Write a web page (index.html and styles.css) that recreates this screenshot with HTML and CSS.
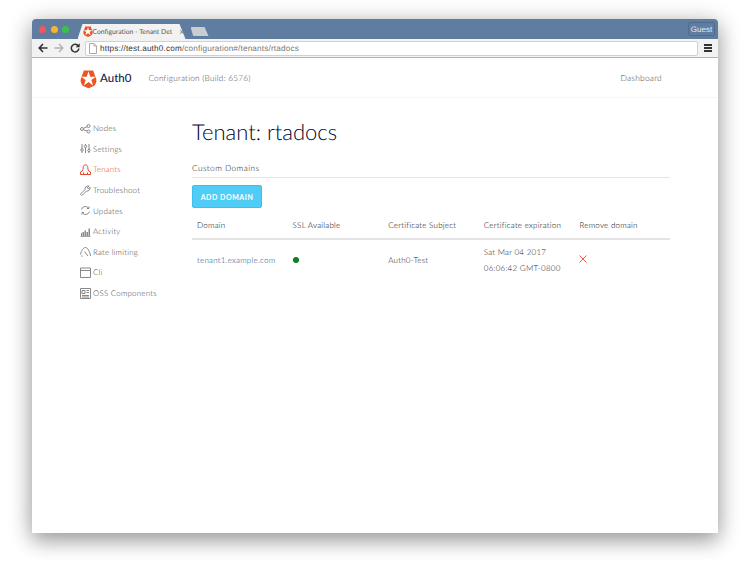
FILE: index.html

```html
<html>
<head>
    <title>Configuration - Tenant Details</title>
    <link rel="stylesheet" href="styles.css">
</head>
<body>
    <div class="window">
        <div class="titlebar">
            <span class="light red"></span>
            <span class="light yellow"></span>
            <span class="light green"></span>
            <div class="tab">
                <svg class="tab-logo" width="10" height="11" viewBox="0 0 22 24"><path fill="#eb5424" d="M17 1H5L1 12c-1 4 1 7 3 9l7 3 7-3c2-2 4-5 3-9z"/><path fill="#fff" d="M11 2l2.200 7h7.300l-5.800 4.300 2.200 7.200L11 16l-5.900 4.500 2.200-7.200L1.500 9h7.300z"/></svg>
                <span class="tab-title">Configuration - Tenant Det</span>
                <span class="tab-close">&#215;</span>
            </div>
            <div class="new-tab"></div>
            <div class="guest">Guest</div>
        </div>
        <div class="toolbar">
            <svg class="nav" width="10" height="10" viewBox="0 0 10 10"><path d="M9.500 5H2M5 1L1.200 5 5 9" fill="none" stroke="#333" stroke-width="1.600"/></svg>
            <svg class="nav" width="10" height="10" viewBox="0 0 10 10"><path d="M.5 5H8M5 1l3.800 4L5 9" fill="none" stroke="#b4b4b4" stroke-width="1.500"/></svg>
            <svg class="nav" width="10" height="10" viewBox="0 0 10 10"><path d="M8.300 3A3.800 3.800 0 1 0 8.900 5.500" fill="none" stroke="#333" stroke-width="1.500"/><path d="M9.700 .3v4H5.700z" fill="#333"/></svg>
            <div class="omnibox">
                <svg width="8" height="11" viewBox="0 0 8 11"><path d="M.5.500h4.500l2.500 2.500v7.500h-7zM5 .5V3h2.500" fill="#fff" stroke="#aaa"/></svg>
                <span class="url">https://test.auth0.com<span class="url-path">/configuration#/tenants/rtadocs</span></span>
            </div>
            <div class="menu"><span></span><span></span><span></span></div>
        </div>
        <div class="page">
            <div class="header">
                <svg class="logo" width="17" height="20" viewBox="0 0 22 24"><path fill="#eb5424" d="M17 1H5L1 12c-1 4 1 7 3 9l7 3 7-3c2-2 4-5 3-9z"/><path fill="#fff" d="M11 2l2.200 7h7.300l-5.800 4.300 2.200 7.200L11 16l-5.900 4.500 2.200-7.200L1.500 9h7.300z"/></svg>
                <span class="brand">Auth0</span>
                <span class="build">Configuration (Build: 6576)</span>
                <a class="dashboard">Dashboard</a>
            </div>
            <div class="content">
                <ul class="sidebar">
                    <li>
                        <svg width="11" height="11" viewBox="0 0 11 11" fill="none" stroke="currentColor"><circle cx="2" cy="6" r="1.500"/><circle cx="8.500" cy="3" r="1.500"/><circle cx="8.500" cy="8.500" r="1.500"/><path d="M3.500 5.300L7 3.700M3.500 6.700L7 8"/></svg>
                        Nodes
                    </li>
                    <li>
                        <svg width="11" height="11" viewBox="0 0 11 11" fill="none" stroke="currentColor"><path d="M2 1v9M5.500 1v9M9 1v9"/><circle cx="2" cy="7" r="1.200" fill="#fff"/><circle cx="5.500" cy="3.500" r="1.200" fill="#fff"/><circle cx="9" cy="7.500" r="1.200" fill="#fff"/></svg>
                        Settings
                    </li>
                    <li class="active">
                        <svg width="11" height="11" viewBox="0 0 11 11" fill="none" stroke="currentColor"><path d="M3.200 3.500c0-3.500 4.600-3.500 4.600 0 0 1.500.2 2.500 1 3.500l1.700 1v2.500H.5V8l1.700-1c.8-1 1-2 1-3.500zM3.500 10.500V8.500M7.500 10.500V8.500"/></svg>
                        Tenants
                    </li>
                    <li>
                        <svg width="11" height="11" viewBox="0 0 11 11" fill="none" stroke="currentColor"><path d="M1 8.500L5 4.500C4.500 2.500 6.500.5 9 1L7.200 2.800l1 1L10 2.200c.5 2.300-1.500 4.300-3.500 3.800L2.500 10c-1 1-2.500-.5-1.500-1.500z"/></svg>
                        Troubleshoot
                    </li>
                    <li>
                        <svg width="11" height="11" viewBox="0 0 11 11" fill="none" stroke="currentColor"><path d="M1.500 4.500a4 4 0 0 1 7-1.500M9.500 6.500a4 4 0 0 1-7 1.500"/><path d="M9 1.500v2H7M2 9.500v-2h2"/></svg>
                        Updates
                    </li>
                    <li>
                        <svg width="11" height="11" viewBox="0 0 11 11" fill="currentColor"><path d="M.5 10h10v.8H.5zM1 7h1v3H1zM2.500 6H4v4H2.500zM4.500 4.500H6V10H4.500zM6.500 6H8v4H6.500zM8.500 2.500H10V10H8.500z"/></svg>
                        Activity
                    </li>
                    <li>
                        <svg width="11" height="11" viewBox="0 0 11 11" fill="none" stroke="currentColor"><path d="M.5 8.500C1.500 4 3.500 1.500 5.500 1.500c2 0 4.500 4 5 8.500M4.500 5.500L8 10M1 10h1.500"/></svg>
                        Rate limiting
                    </li>
                    <li>
                        <svg width="11" height="11" viewBox="0 0 11 11" fill="none" stroke="currentColor"><path d="M.5 1h10v9.500H.5zM.5 3.500h10"/></svg>
                        Cli
                    </li>
                    <li>
                        <svg width="11" height="11" viewBox="0 0 11 11" fill="none" stroke="currentColor"><path d="M.5.500h10v10H.5zM2 2.500h3v3H2zM6.500 2.500h2.500M6.500 4.500h2.500M2 7.500h7M2 9h7"/></svg>
                        OSS Components
                    </li>
                </ul>
                <div class="main">
                    <h1>Tenant: rtadocs</h1>
                    <h2>Custom Domains</h2>
                    <button class="add-btn">ADD DOMAIN</button>
                    <table>
                        <thead>
                            <tr>
                                <th>Domain</th>
                                <th>SSL Available</th>
                                <th>Certificate Subject</th>
                                <th>Certificate expiration</th>
                                <th>Remove domain</th>
                            </tr>
                        </thead>
                        <tbody>
                            <tr>
                                <td><a class="domain">tenant1.example.com</a></td>
                                <td><span class="dot"></span></td>
                                <td>Auth0-Test</td>
                                <td>Sat Mar 04 2017<br>06:06:42 GMT-0800</td>
                                <td><svg class="remove" width="8" height="8" viewBox="0 0 8 8"><path d="M.5.500l7 7M7.500.5l-7 7" stroke="#f0564a" fill="none"/></svg></td>
                            </tr>
                        </tbody>
                    </table>
                </div>
            </div>
        </div>
    </div>
</body>
</html>
```

FILE: styles.css

```css
html, body {
    margin: 0;
    height: 579px;
    overflow: hidden;
    background: #fff;
}
body {
    padding: 19px 32px 0;
    box-sizing: border-box;
    font-family: Lato, "Open Sans", sans-serif;
    text-rendering: geometricPrecision;
}
.window {
    width: 686px;
    height: 514px;
    display: flex;
    flex-direction: column;
    background: #fff;
    border-radius: 4px 4px 0 0;
    box-shadow: 0 8px 20px rgba(0, 0, 0, 0.3), 0 2px 26px rgba(0, 0, 0, 0.18);
}

/* browser chrome */
.titlebar {
    height: 20px;
    display: flex;
    align-items: flex-end;
    background: #5f7da1;
    border-radius: 4px 4px 0 0;
    padding-left: 7px;
}
.light {
    width: 7px;
    height: 7px;
    border-radius: 50%;
    margin: 0 4.500px 6px 0;
}
.red { background: #f2575a; }
.yellow { background: #f5b52e; }
.green { background: #3bc14a; }
.tab {
    width: 108px;
    height: 15px;
    margin-left: 4px;
    padding-left: 5px;
    box-sizing: border-box;
    display: flex;
    align-items: center;
    background: #f2f2f2;
    clip-path: polygon(0 100%, 5px 0, 102px 0, 100% 100%);
    font-size: 6.800px;
    color: #555;
}
.tab-logo {
    flex-shrink: 0;
}
.tab-title {
    white-space: nowrap;
}
.tab-close {
    margin-left: 7px;
    font-size: 9px;
    color: #777;
}
.new-tab {
    width: 18px;
    height: 9px;
    margin: 0 0 3px 5px;
    background: #c9ccd0;
    clip-path: polygon(0 0, 78% 0, 100% 100%, 15% 100%);
}
.guest {
    margin: 0 3px 3px auto;
    width: 27px;
    height: 14px;
    line-height: 13px;
    box-sizing: border-box;
    border: 1px solid #4f6c8e;
    border-radius: 2px;
    text-align: center;
    font-family: "Liberation Sans", sans-serif;
    font-size: 8px;
    color: #e4e9ef;
}
.toolbar {
    height: 19px;
    display: flex;
    align-items: center;
    background: #f2f2f2;
    border-bottom: 1px solid #b5b5b5;
    box-sizing: border-box;
    padding: 0 6px;
}
.nav {
    margin-right: 6px;
    flex-shrink: 0;
}
.omnibox {
    flex: 1;
    height: 15px;
    margin-left: -1px;
    display: flex;
    align-items: center;
    gap: 3px;
    padding-left: 3px;
    background: #fff;
    border: 1px solid #d0d0d0;
    border-radius: 2px;
    box-sizing: border-box;
}
.url {
    font-family: "Liberation Sans", sans-serif;
    font-size: 8.200px;
    color: #333;
    letter-spacing: 0.02em;
}
.url-path { color: #777; }
.menu {
    width: 8px;
    margin-left: 6px;
    display: flex;
    flex-direction: column;
    gap: 1px;
}
.menu span {
    height: 2px;
    background: #333;
}

/* page */
.page {
    flex: 1;
    display: flex;
    flex-direction: column;
}
.header {
    height: 40px;
    display: flex;
    align-items: center;
    padding: 2px 56px 0 48px;
    border-bottom: 1px solid #f6f6f6;
    box-sizing: border-box;
}
.logo { margin-right: 3px; }
.brand {
    font-size: 11.500px;
    font-weight: 500;
    color: #16214d;
}
.build {
    margin: 0 0 2px 17px;
    font-size: 8.200px;
    font-weight: 300;
    letter-spacing: 0.03em;
    color: #444;
}
.dashboard {
    margin: 0 0 2px auto;
    font-size: 8.400px;
    font-weight: 300;
    letter-spacing: 0.03em;
    color: #444;
}
.content {
    display: flex;
    padding-left: 48px;
}
.sidebar {
    width: 112px;
    margin: 20px 0 0;
    padding: 0;
    list-style: none;
    font-size: 7.900px;
    font-weight: 300;
    letter-spacing: 0.03em;
    color: #444;
}
.sidebar li {
    height: 20.600px;
    display: flex;
    align-items: center;
    gap: 2px;
}
.sidebar svg {
    color: #888;
    flex-shrink: 0;
}
.sidebar .active,
.sidebar .active svg {
    color: #e2472f;
}
.main {
    width: 478px;
}
h1 {
    margin: 21px 0 0;
    font-size: 22px;
    line-height: 26px;
    font-weight: 300;
    color: #000626;
}
h2 {
    margin: 17px 0 0;
    padding-bottom: 3px;
    font-size: 8.300px;
    line-height: 12px;
    font-weight: 300;
    letter-spacing: 0.05em;
    color: #111;
    border-bottom: 1px solid #e4e4e4;
}
.add-btn {
    display: block;
    width: 70px;
    height: 23px;
    margin-top: 7px;
    padding: 0;
    border: 1px solid #3dbff0;
    border-radius: 2px;
    background: #4fcdf7;
    color: #fff;
    font-family: Lato, sans-serif;
    font-size: 7px;
    font-weight: 700;
    letter-spacing: 0.08em;
}
table {
    width: 100%;
    margin-top: 4px;
    border-collapse: collapse;
    table-layout: fixed;
    font-size: 8px;
    font-weight: 300;
    letter-spacing: 0.03em;
}
th {
    height: 27px;
    padding: 0 0 0 5px;
    text-align: left;
    font-weight: 300;
    color: #000;
    border-bottom: 2px solid #e4e4e4;
}
td {
    height: 41px;
    padding: 0 0 0 5px;
    line-height: 16px;
    color: #222;
}
.domain { color: #0f4c8a; }
.dot {
    display: inline-block;
    width: 6px;
    height: 6px;
    border-radius: 50%;
    background: #0b7d22;
}
.remove { display: block; margin-bottom: 2px; }
```
